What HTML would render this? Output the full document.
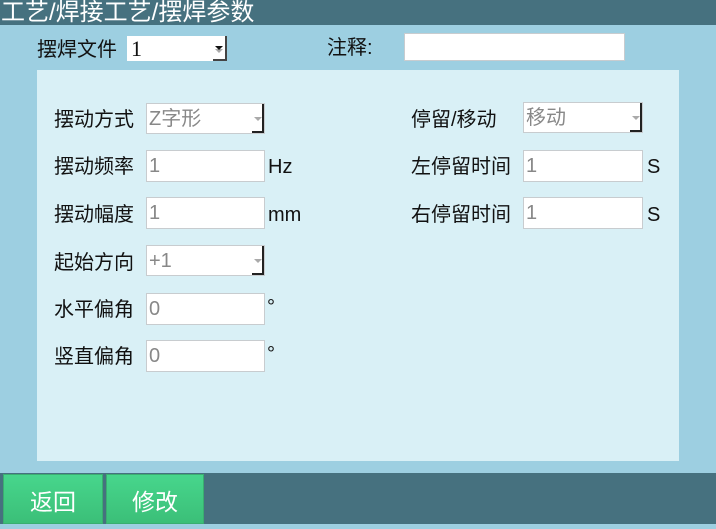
<!DOCTYPE html>
<html><head><meta charset="utf-8"><style>
*{margin:0;padding:0;box-sizing:border-box}
body{width:716px;height:524px;background:#9dcfe1;position:relative;overflow:hidden;font-family:"Liberation Sans","Noto Sans CJK SC",sans-serif;}
.a{position:absolute}
.title{left:0;top:0;width:716px;height:25px;background:#46717f;color:#fff;font-size:24px;line-height:25px;padding-left:1px;white-space:nowrap}
.panel{left:37px;top:70px;width:642px;height:391px;background:#d9f0f6}
.lbl{font-size:20px;color:#111;line-height:26px;white-space:nowrap}
.box{background:#fff;border:1px solid #c8cccf;color:#888;font-size:20px;line-height:30px;padding-left:2px;white-space:nowrap}
.arr{position:absolute;right:0;top:0;width:12px;height:100%;border-right:2px solid #222;border-bottom:2px solid #222}
.arr:after{content:"";position:absolute;left:2px;top:13px;border-left:4px solid transparent;border-right:4px solid transparent;border-top:4px solid #aaa}
.unit{font-size:20px;color:#111;line-height:26px}
.bot{left:0;top:473px;width:716px;height:51px;background:#46717f}
.btn{top:474px;height:50px;background:linear-gradient(#47d68c,#3bbf78);color:#fff;font-size:23px;text-align:center;line-height:54px;border:1px solid #3aae70}
</style></head><body>
<div class="a title">工艺/焊接工艺/摆焊参数</div>
<div class="a lbl" style="left:37px;top:37px">摆焊文件</div>
<div class="a" style="left:127px;top:36px;width:100px;height:25px;background:#fff;font-family:'Liberation Serif','Noto Serif CJK SC',serif;font-size:22px;line-height:25px;padding-left:4px;color:#111">1<div class="arr" style="border-color:#444;width:14px"></div><div class="a" style="right:4px;top:10px;border-left:4px solid transparent;border-right:4px solid transparent;border-top:4px solid #111"></div></div>
<div class="a lbl" style="left:327px;top:35px">注释:</div>
<div class="a" style="left:404px;top:33px;width:221px;height:28px;background:#fff;border:1px solid #c8cccf"></div>
<div class="a panel"></div>

<div class="a lbl" style="left:54px;top:107px">摆动方式</div>
<div class="a box" style="left:146px;top:103px;width:119px;height:31px">Z字形<div class="arr"></div></div>
<div class="a lbl" style="left:54px;top:154px">摆动频率</div>
<div class="a box" style="left:146px;top:150px;width:119px;height:32px">1</div>
<div class="a unit" style="left:268px;top:154px">Hz</div>
<div class="a lbl" style="left:54px;top:202px">摆动幅度</div>
<div class="a box" style="left:146px;top:197px;width:119px;height:32px">1</div>
<div class="a unit" style="left:268px;top:202px">mm</div>
<div class="a lbl" style="left:54px;top:250px">起始方向</div>
<div class="a box" style="left:146px;top:245px;width:119px;height:31px">+1<div class="arr"></div></div>
<div class="a lbl" style="left:54px;top:297px">水平偏角</div>
<div class="a box" style="left:146px;top:293px;width:119px;height:32px">0</div>
<div class="a unit" style="left:267px;top:294px">°</div>
<div class="a lbl" style="left:54px;top:344px">竖直偏角</div>
<div class="a box" style="left:146px;top:340px;width:119px;height:32px">0</div>
<div class="a unit" style="left:267px;top:341px">°</div>

<div class="a lbl" style="left:411px;top:107px">停留/移动</div>
<div class="a box" style="left:523px;top:102px;width:120px;height:31px">移动<div class="arr"></div></div>
<div class="a lbl" style="left:411px;top:154px">左停留时间</div>
<div class="a box" style="left:523px;top:150px;width:120px;height:32px">1</div>
<div class="a unit" style="left:647px;top:154px">S</div>
<div class="a lbl" style="left:411px;top:202px">右停留时间</div>
<div class="a box" style="left:523px;top:197px;width:120px;height:32px">1</div>
<div class="a unit" style="left:647px;top:202px">S</div>

<div class="a bot"></div>
<div class="a btn" style="left:3px;width:100px">返回</div>
<div class="a btn" style="left:106px;width:98px">修改</div>
</body></html>
